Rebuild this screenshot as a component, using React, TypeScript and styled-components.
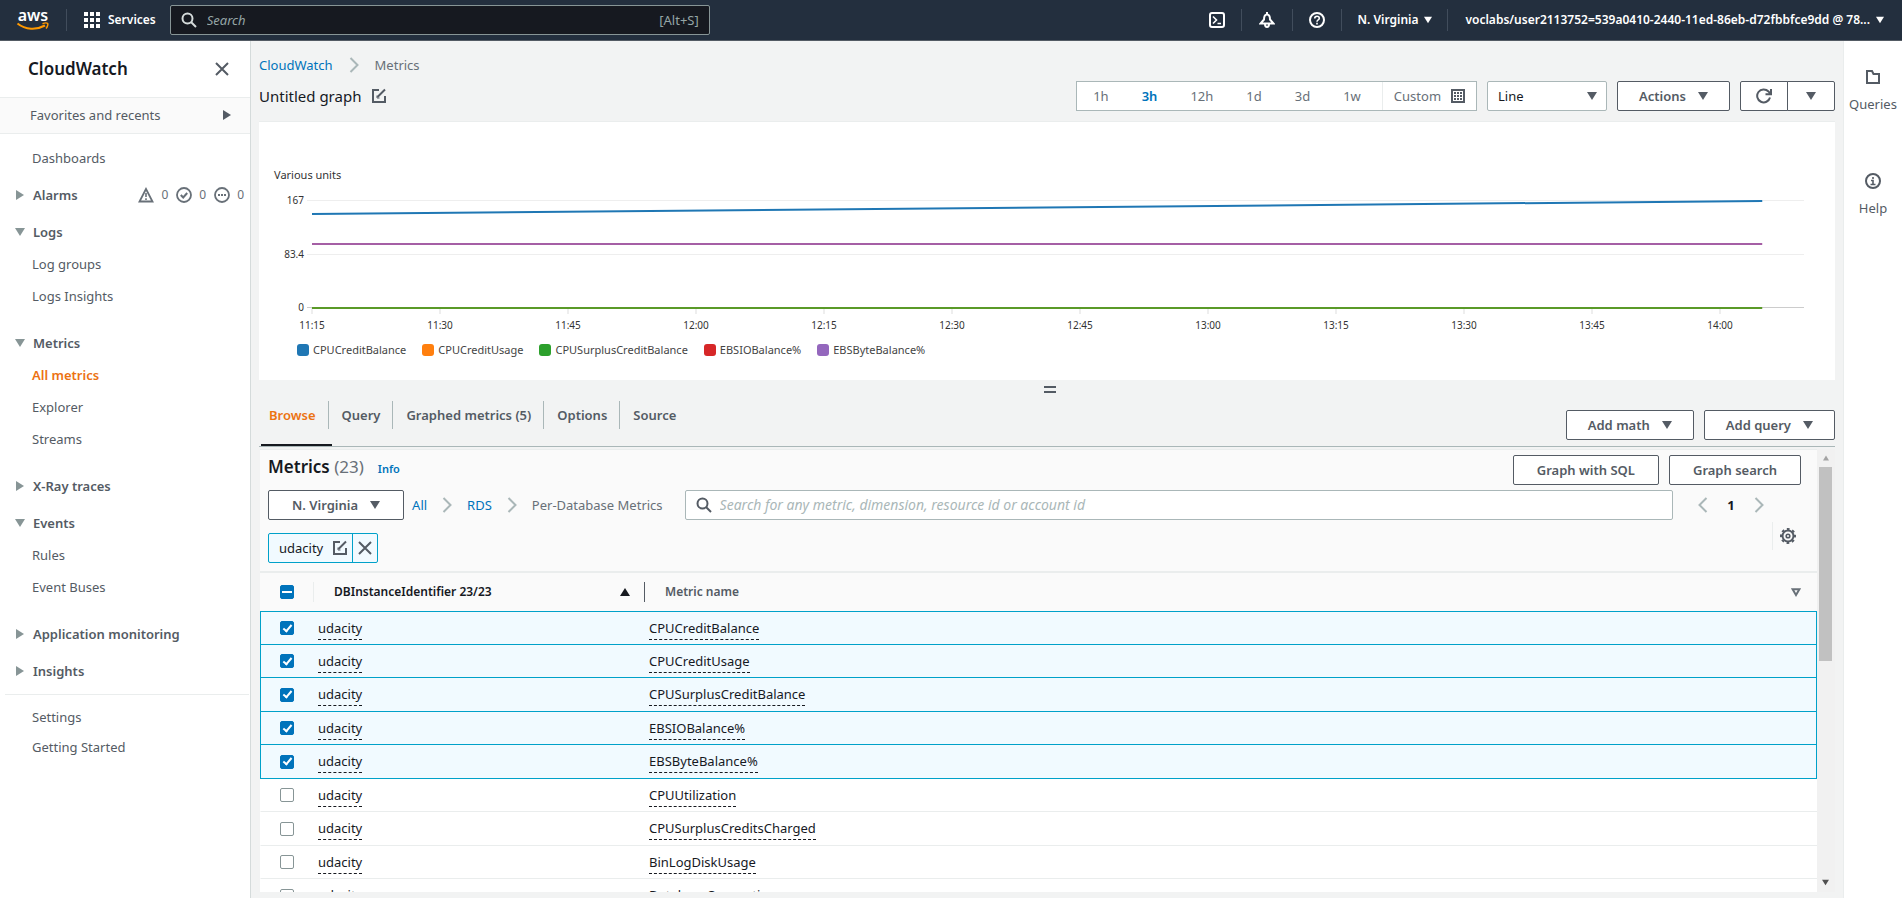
import React, { useEffect, useRef, useState } from 'react';
import styled, { createGlobalStyle, css } from 'styled-components';

const color = {
  nav: '#232f3e',
  page: '#f2f3f3',
  text: '#16191f',
  strong: '#545b64',
  muted: '#687078',
  border: '#aab7b8',
  divider: '#eaeded',
  link: '#0073bb',
  accent: '#ec7211',
  selected: '#f1faff',
  selectedBorder: '#00a1c9',
};

const GlobalStyle = createGlobalStyle`
  *, *::before, *::after { box-sizing: border-box; }
  body {
    margin: 0;
    background: ${color.page};
    color: ${color.text};
    font: 13px/20px "Noto Sans", "Open Sans", sans-serif;
  }
  button, input, select { font: inherit; color: inherit; }
  button { cursor: pointer; }
  a { text-decoration: none; }
  ul, ol { list-style: none; margin: 0; padding: 0; }
  h1, h2 { margin: 0; }
  svg { display: block; flex: none; }
`;

/* ---------- icons ---------- */

const Stroke = styled.svg.attrs({ viewBox: '0 0 16 16', width: 16, height: 16, 'aria-hidden': true })`
  fill: none;
  stroke: currentColor;
  stroke-width: 2;
`;

const Caret = ({ size = 10, dir = 'down' }: { size?: number; dir?: 'down' | 'right' | 'up' }) => {
  const d = { down: 'M0 1h10L5 9z', right: 'M1 0v10l8-5z', up: 'M0 9h10L5 1z' }[dir];
  return (
    <svg width={size} height={size} viewBox="0 0 10 10" fill="currentColor" aria-hidden="true">
      <path d={d} />
    </svg>
  );
};

const CloseIcon = () => (
  <Stroke><path d="M2 2l12 12M14 2L2 14" /></Stroke>
);
const EditIcon = () => (
  <Stroke><path d="M8 2H2v12h12V8M14 1.5L6.5 9" /><path d="M6 7.5V10h2.5" strokeWidth="1" /></Stroke>
);
const SearchIcon = () => (
  <Stroke><circle cx="6.5" cy="6.5" r="5" /><path d="M10 10l5 5" /></Stroke>
);
const Chevron = ({ left = false }: { left?: boolean }) => (
  <svg width="10" height="16" viewBox="0 0 10 16" fill="none" stroke={color.border} strokeWidth="2" aria-hidden="true">
    <path d={left ? 'M8.5 1l-7 7 7 7' : 'M1.5 1l7 7-7 7'} />
  </svg>
);
const GridIcon = () => (
  <svg width="16" height="16" viewBox="0 0 16 16" fill="currentColor" aria-hidden="true">
    {[0, 6, 12].map(y => [0, 6, 12].map(x => <rect key={`${x}-${y}`} x={x} y={y} width="4" height="4" />))}
  </svg>
);
const ShellIcon = () => (
  <Stroke><rect x="1" y="1" width="14" height="14" rx="2" /><path d="M4 4.5L7.5 8 4 11.5M8.5 11.5H12" strokeWidth="1.6" /></Stroke>
);
const BellIcon = () => (
  <Stroke><path d="M1.5 11.5h13L11 7.500C11 4 10 2.500 8 2.500S5 4 5 7.500z" /><path d="M8 0v2.500M6 12c0 4 4 4 4 0" /></Stroke>
);
const QuestionIcon = () => (
  <Stroke><circle cx="8" cy="8" r="7" /><path d="M5.700 6.500c0-3 4.600-3 4.600-.2C10.300 8 8 7.800 8 9.700M8 10.800v1.600" strokeWidth="1.6" /></Stroke>
);
const WarningIcon = () => (
  <Stroke><path d="M8 2L1.500 14.500h13z" strokeWidth="1.800" /><path d="M8 6v4M8 11.200V13" strokeWidth="1.6" /></Stroke>
);
const OkIcon = () => (
  <Stroke><circle cx="8" cy="8" r="7" strokeWidth="1.800" /><path d="M4.800 8l2.400 2.500L11.200 6" /></Stroke>
);
const PendingIcon = () => (
  <Stroke><circle cx="8" cy="8" r="7" strokeWidth="1.800" /><path d="M4 8h2M7 8h2M10 8h2" /></Stroke>
);
const InfoIcon = () => (
  <Stroke><circle cx="8" cy="8" r="7" /><path d="M8 4v2M6 7.500h2v4M5.500 11.500h5" strokeWidth="1.600" /></Stroke>
);
const FolderIcon = () => (
  <Stroke><path d="M2 2h5l1.500 3H14v9H2z" /></Stroke>
);
const RefreshIcon = () => (
  <Stroke><path d="M14 9.500A6.500 6.500 0 1 1 12.500 3.500L14.500 6M15 1v5.200H9.500" /></Stroke>
);
const CalendarIcon = () => (
  <svg width="14" height="14" viewBox="0 0 14 14" fill="currentColor" aria-hidden="true">
    <path fillRule="evenodd" d="M0 0h14v14H0zM2 2v10h10V2z" />
    {[3, 6, 9].map(y => [3, 6, 9].map(x => <rect key={`${x}-${y}`} x={x} y={y} width="2" height="2" />))}
  </svg>
);
const GearIcon = () => (
  <Stroke>
    <circle cx="8" cy="8" r="5.500" />
    <circle cx="8" cy="8" r="7" strokeDasharray="2.750 2.750" strokeDashoffset="1.370" />
    <circle cx="8" cy="8" r="1.800" strokeWidth="1.600" />
  </Stroke>
);
const FilterIcon = () => (
  <svg width="10" height="9" viewBox="0 0 10 9" fill="none" stroke={color.muted} strokeWidth="2" aria-hidden="true">
    <path d="M1.600 1.200h6.800L5 7z" />
  </svg>
);
const LogoSvg = styled.svg`
  overflow: visible;
`;
const AwsLogo = () => (
  <LogoSvg width="34" height="24" viewBox="0 0 34 24" role="img" aria-label="AWS">
    <text x="17" y="13" fill="#fff" textAnchor="middle" fontFamily="Noto Sans, sans-serif" fontWeight="600" fontSize="16">aws</text>
    <path d="M1.500 15.500c8 6.500 19 6.700 27.500 2" fill="none" stroke="#ff9900" strokeWidth="2" />
    <path d="M26.500 15.700c2-.8 4.500-.9 5.200-.2.500.8-.3 3.500-1.700 5" fill="none" stroke="#ff9900" strokeWidth="1.500" />
  </LogoSvg>
);

/* ---------- top navigation ---------- */

const TopNav = styled.header`
  display: flex;
  align-items: center;
  height: 41px;
  padding: 0 18px 0 16px;
  background: ${color.nav};
  border-bottom: 1px solid ${color.strong};
  color: #fff;
  font-size: 12px;
  font-weight: 600;
`;
const NavDivider = styled.span`
  width: 1px;
  height: 22px;
  background: #414d5c;
`;
const NavButton = styled.button<{ $start?: number; $end?: number; $gap?: number }>`
  display: flex;
  align-items: center;
  gap: ${p => p.$gap ?? 8}px;
  padding: 0 ${p => p.$end ?? 16}px 0 ${p => p.$start ?? 16}px;
  border: 0;
  background: none;
  white-space: nowrap;
`;
const LogoLink = styled.a`
  margin-right: 16px;
`;
const NavSearch = styled.label`
  display: flex;
  align-items: center;
  gap: 8px;
  flex: 0 1 540px;
  height: 30px;
  margin-right: auto;
  padding: 0 10px;
  border: 1px solid #879596;
  border-radius: 2px;
  background: #161920;
  color: #d5dbdb;
  font-size: 13px;
  font-weight: 400;
`;
const NavSearchInput = styled.input`
  flex: 1;
  min-width: 0;
  border: 0;
  outline: 0;
  background: none;
  &::placeholder { color: #95a5a6; font-style: italic; opacity: 1; }
`;
const Shortcut = styled.span`
  color: #95a5a6;
`;

/* ---------- page frame ---------- */

const Page = styled.div`
  display: flex;
  flex-direction: column;
  height: 100vh;
  overflow: hidden;
`;
const Frame = styled.div`
  display: grid;
  grid-template-columns: 251px minmax(0, 1fr) 59px;
  flex: 1;
  min-height: 0;
`;

/* ---------- side navigation ---------- */

const Sidebar = styled.nav`
  background: #fff;
  border-right: 1px solid #d5dbdb;
  color: ${color.strong};
  overflow: hidden;
`;
const SidebarHeader = styled.div`
  display: flex;
  align-items: center;
  justify-content: space-between;
  height: 56px;
  padding: 0 20px 0 28px;
`;
const ServiceName = styled.h2`
  color: ${color.text};
  font-size: 17px;
  font-weight: 600;
`;
const IconButton = styled.button`
  display: flex;
  align-items: center;
  justify-content: center;
  padding: 0;
  border: 0;
  background: none;
  color: ${color.strong};
`;
const Favorites = styled.button`
  display: flex;
  align-items: center;
  justify-content: space-between;
  width: 100%;
  height: 37px;
  padding: 0 18px 2px 30px;
  border: 1px solid ${color.divider};
  border-width: 1px 0;
  background: #fafafa;
`;
const NavBody = styled.div`
  padding-top: 8px;
`;
const SideLink = styled.a<{ $active?: boolean; $short?: boolean }>`
  display: block;
  padding-left: 32px;
  line-height: ${p => (p.$short ? 30 : 32)}px;
  color: ${p => (p.$active ? color.accent : color.strong)};
  font-weight: ${p => (p.$active ? 600 : 400)};
`;
const Group = styled.section`
  margin-top: 5px;
`;
const GroupHead = styled.div`
  display: flex;
  align-items: center;
  justify-content: space-between;
  height: 32px;
  padding: 0 6px 0 15px;
`;
const GroupToggle = styled.button`
  display: flex;
  align-items: center;
  gap: 8px;
  padding: 0;
  border: 0;
  background: none;
  font-weight: 600;
  svg { color: #879596; }
`;
const GroupList = styled.ul`
  padding-bottom: 10px;
`;
const AlarmCounts = styled.ul`
  display: flex;
  gap: 8px;
  color: ${color.muted};
  font-size: 12px;
`;
const AlarmCount = styled.li`
  display: flex;
  align-items: center;
  gap: 7px;
`;
const SideRule = styled.hr`
  height: 1px;
  margin: 7px 1px 7px 5px;
  border: 0;
  background: ${color.divider};
`;

type NavGroup = { label: string; open: boolean; links: string[]; alarms?: boolean };
const navGroups: NavGroup[] = [
  { label: 'Alarms', open: false, links: [], alarms: true },
  { label: 'Logs', open: true, links: ['Log groups', 'Logs Insights'] },
  { label: 'Metrics', open: true, links: ['All metrics', 'Explorer', 'Streams'] },
  { label: 'X-Ray traces', open: false, links: [] },
  { label: 'Events', open: true, links: ['Rules', 'Event Buses'] },
  { label: 'Application monitoring', open: false, links: [] },
  { label: 'Insights', open: false, links: [] },
];

const SideNav = () => (
  <Sidebar aria-label="CloudWatch">
    <SidebarHeader>
      <ServiceName>CloudWatch</ServiceName>
      <IconButton aria-label="Close navigation"><CloseIcon /></IconButton>
    </SidebarHeader>
    <Favorites>Favorites and recents<Caret dir="right" /></Favorites>
    <NavBody>
      <SideLink href="#dashboards">Dashboards</SideLink>
      {navGroups.map(g => (
        <Group key={g.label}>
          <GroupHead>
            <GroupToggle aria-expanded={g.open}>
              <Caret dir={g.open ? 'down' : 'right'} />
              {g.label}
            </GroupToggle>
            {g.alarms && (
              <AlarmCounts>
                <AlarmCount><WarningIcon />0</AlarmCount>
                <AlarmCount><OkIcon />0</AlarmCount>
                <AlarmCount><PendingIcon />0</AlarmCount>
              </AlarmCounts>
            )}
          </GroupHead>
          {g.links.length > 0 && (
            <GroupList>
              {g.links.map(l => (
                <li key={l}><SideLink href="#nav" $active={l === 'All metrics'}>{l}</SideLink></li>
              ))}
            </GroupList>
          )}
        </Group>
      ))}
      <SideRule />
      <SideLink href="#settings" $short>Settings</SideLink>
      <SideLink href="#start" $short>Getting Started</SideLink>
    </NavBody>
  </Sidebar>
);

/* ---------- shared controls ---------- */

const Button = styled.button<{ $pad?: number }>`
  display: inline-flex;
  align-items: center;
  justify-content: center;
  gap: 12px;
  height: 30px;
  padding: 0 ${p => p.$pad ?? 21}px;
  border: 1px solid ${color.strong};
  border-radius: 2px;
  background: #fff;
  color: ${color.strong};
  font-weight: 600;
  white-space: nowrap;
`;
const ButtonRow = styled.div`
  display: flex;
  gap: 10px;
`;
const Crumbs = styled.ol<{ $gap: number }>`
  display: flex;
  align-items: center;
  gap: ${p => p.$gap}px;
  color: ${color.muted};
  white-space: nowrap;
  li { display: flex; align-items: center; gap: ${p => p.$gap}px; }
  a { color: ${color.link}; }
`;

/* ---------- main column ---------- */

const Main = styled.main`
  display: flex;
  flex-direction: column;
  min-height: 0;
  padding: 14px 8px 6px;
`;
const TitleBar = styled.div`
  display: flex;
  align-items: center;
  justify-content: space-between;
  margin: 6px 0 10px;
`;
const GraphTitle = styled.h1`
  display: flex;
  align-items: center;
  gap: 10px;
  font-size: 15px;
  font-weight: 400;
`;
const RangeGroup = styled.div`
  display: flex;
  height: 30px;
  border: 1px solid ${color.border};
  background: #fff;
`;
const RangeButton = styled.button<{ $active?: boolean; $custom?: boolean }>`
  display: flex;
  align-items: center;
  gap: 10px;
  padding: 0 17px 0 16px;
  border: 0;
  background: none;
  color: ${p => (p.$active ? color.link : color.muted)};
  font-weight: ${p => (p.$active ? 600 : 400)};
  ${p => p.$custom && css`
    margin-left: 4px;
    padding: 0 11px;
    border-left: 1px solid ${color.divider};
    svg { color: ${color.strong}; }
  `}
`;
const SelectBox = styled.div`
  display: grid;
  align-items: center;
  width: 120px;
  height: 30px;
  border: 1px solid ${color.border};
  border-radius: 2px;
  background: #fff;
  > * { grid-area: 1 / 1; }
  svg { justify-self: end; margin-right: 9px; color: ${color.strong}; pointer-events: none; }
`;
const Select = styled.select`
  width: 100%;
  height: 28px;
  padding: 0 10px;
  border: 0;
  appearance: none;
  background: none;
`;
const SplitButton = styled.div`
  display: flex;
  ${Button} { width: 48px; }
  ${Button}:first-child { border-radius: 2px 0 0 2px; }
  ${Button}:last-child { margin-left: -1px; border-radius: 0 2px 2px 0; }
`;

/* ---------- chart ---------- */

const ChartPanel = styled.section`
  padding: 43px 31px 20px 53px;
  border-top: 1px solid ${color.divider};
  background: #fff;
  font-size: 11px;
`;
const ChartUnits = styled.div`
  margin-left: -38px;
  line-height: 20px;
  color: #333;
`;
const Plot = styled.svg`
  width: 100%;
  height: 152px;
  overflow: visible;
  font-size: 10px;
  fill: #333;
`;
const Legend = styled.ul`
  display: flex;
  gap: 16px;
  margin: 3px 0 0 -15px;
  line-height: 20px;
  color: #444;
`;
const LegendItem = styled.li`
  display: flex;
  align-items: center;
  gap: 4px;
`;
const Swatch = styled.span<{ $color: string }>`
  width: 12px;
  height: 12px;
  border-radius: 3px;
  background: ${p => p.$color};
`;

const ticks = ['11:15', '11:30', '11:45', '12:00', '12:15', '12:30', '12:45', '13:00', '13:15', '13:30', '13:45', '14:00'];
const gridLines = [
  { label: '167', y: 15 },
  { label: '83.4', y: 69 },
  { label: '0', y: 122 },
];
const series = [
  { name: 'CPUCreditBalance', color: '#1f77b4' },
  { name: 'CPUCreditUsage', color: '#ff7f0e' },
  { name: 'CPUSurplusCreditBalance', color: '#2ca02c' },
  { name: 'EBSIOBalance%', color: '#d62728' },
  { name: 'EBSByteBalance%', color: '#9467bd' },
];

const Chart = () => (
  <ChartPanel aria-label="Graph">
    <ChartUnits>Various units</ChartUnits>
    <Plot>
      {gridLines.map(g => (
        <g key={g.label}>
          <line x1="-5" x2="100%" y1={g.y + 0.5} y2={g.y + 0.5} stroke={g.y === 122 ? '#cccccc' : '#eeeeee'} />
          <text x="-8" y={g.y + 4} textAnchor="end">{g.label}</text>
        </g>
      ))}
      {ticks.map((t, i) => {
        const x = `${(i * 128 * 100) / 1492}%`;
        return (
          <g key={t}>
            <line x1={x} x2={x} y1="123" y2="129" stroke="#dddddd" />
            <text x={x} y="144" textAnchor="middle">{t}</text>
          </g>
        );
      })}
      <line x1="0" x2="97.200%" y1="29" y2="16" stroke="#1f77b4" strokeWidth="2" />
      <line x1="0" x2="97.200%" y1="59" y2="59" stroke="#a55fa5" strokeWidth="2" />
      <line x1="0" x2="97.200%" y1="123" y2="123" stroke="#5a9a28" strokeWidth="2" />
    </Plot>
    <Legend>
      {series.map(s => (
        <LegendItem key={s.name}><Swatch $color={s.color} />{s.name}</LegendItem>
      ))}
    </Legend>
  </ChartPanel>
);

/* ---------- tabs ---------- */

const ResizeHandle = styled.button`
  align-self: center;
  width: 12px;
  height: 7px;
  margin: 6px 0 8px 6px;
  padding: 0;
  border: solid ${color.strong};
  border-width: 2px 0;
  background: none;
`;
const TabBar = styled.div`
  display: flex;
  justify-content: space-between;
  height: 46px;
  border-bottom: 1px solid ${color.border};
`;
const TabList = styled.div`
  display: flex;
  gap: 2px;
  padding-left: 2px;
`;
const Tab = styled.button<{ $active?: boolean }>`
  display: flex;
  align-items: flex-start;
  padding: 0 3px 0 8px;
  border: 0;
  border-bottom: 2px solid ${p => (p.$active ? color.text : 'transparent')};
  background: none;
  color: ${p => (p.$active ? color.accent : color.strong)};
  font-weight: 600;
  white-space: nowrap;
  span {
    padding-right: 12px;
    border-right: 1px solid ${color.border};
    line-height: 28px;
  }
  &:last-child span { border-right: 0; }
`;
const TabActions = styled(ButtonRow)`
  padding-top: 9px;
`;

/* ---------- metric browser ---------- */

const Browser = styled.section`
  display: flex;
  flex: 1;
  min-height: 0;
  margin: 2px 0 0 1px;
`;
const BrowserContent = styled.div`
  flex: 1;
  min-width: 0;
  overflow: hidden;
  background: #fff;
`;
const BrowserHead = styled.div`
  padding: 5px 16px 0 8px;
  border-top: 1px solid ${color.divider};
  background: #fafafa;
`;
const HeadRow = styled.div`
  display: flex;
  justify-content: space-between;
  margin-bottom: 5px;
`;
const Heading = styled.h2`
  font-size: 17px;
  font-weight: 600;
  line-height: 24px;
`;
const Count = styled.span`
  color: ${color.muted};
  font-weight: 400;
`;
const InfoLink = styled.a`
  margin-left: 14px;
  color: ${color.link};
  font-size: 11px;
`;
const FilterRow = styled.div`
  display: flex;
  align-items: center;
  gap: 8px;
`;
const MetricSearch = styled.label`
  display: flex;
  align-items: center;
  gap: 8px;
  flex: 1;
  height: 30px;
  margin-left: 14px;
  padding: 0 10px;
  border: 1px solid ${color.border};
  border-radius: 2px;
  background: #fff;
  color: ${color.strong};
  font-size: 14px;
`;
const MetricSearchInput = styled.input`
  flex: 1;
  min-width: 0;
  padding: 0;
  border: 0;
  outline: 0;
  &::placeholder { color: ${color.border}; font-style: italic; opacity: 1; }
`;
const Pagination = styled.div`
  display: flex;
  margin: 0 28px 0 8px;
  ${IconButton} { width: 28px; height: 28px; color: ${color.text}; }
`;
const TokenRow = styled.div`
  display: flex;
  align-items: flex-start;
  justify-content: space-between;
  padding-top: 2px;
`;
const Token = styled.div`
  display: flex;
  height: 30px;
  margin: 11px 0 8px;
  border: 1px solid ${color.selectedBorder};
  border-radius: 2px;
  background: ${color.selected};
  ${IconButton} { gap: 9px; padding: 0 4px 0 10px; color: ${color.text}; }
  ${IconButton} + ${IconButton} { padding: 0 4px; border-left: 1px solid ${color.selectedBorder}; }
  svg { color: ${color.strong}; }
`;
const Preferences = styled.div`
  display: flex;
  height: 28px;
  padding: 0 5px 0 7px;
  border-left: 1px solid ${color.divider};
`;

const Table = styled.table`
  width: 100%;
  border-spacing: 0;
  border-top: 2px solid ${color.divider};
  table-layout: fixed;
  th, td { padding: 0; text-align: left; }
`;
const Col = styled.col<{ $width?: number }>`
  width: ${p => (p.$width ? `${p.$width}px` : 'auto')};
`;
const Th = styled.th<{ $sorted?: boolean }>`
  height: 38px;
  background: #fafafa;
  color: ${p => (p.$sorted ? color.text : color.strong)};
  font-size: 12px;
  font-weight: 600;
`;
const ThInner = styled.div<{ $line?: string; $pad: number }>`
  display: flex;
  align-items: center;
  justify-content: space-between;
  height: 20px;
  padding: 0 ${p => (p.$line ? 14 : 16)}px 0 ${p => p.$pad}px;
  border-right: ${p => (p.$line ? `1px solid ${p.$line}` : 0)};
`;
const Row = styled.tr<{ $selected: boolean }>`
  height: 33px;
  background: ${p => (p.$selected ? color.selected : '#fff')};
  &:nth-child(odd) { height: 34px; }
  td { border-bottom: 1px solid ${p => (p.$selected ? color.selectedBorder : color.divider)}; }
  td:first-child { padding-left: 19px; border-left: 1px solid ${p => (p.$selected ? color.selectedBorder : '#fff')}; }
  ${p => p.$selected && css`
    &:first-child td { border-top: 1px solid ${color.selectedBorder}; }
    td:last-child { border-right: 1px solid ${color.selectedBorder}; }
  `}
`;
const Cell = styled.td`
  && { padding-left: 4px; }
`;
const Value = styled.button`
  display: block;
  padding: 0;
  border: 0;
  border-bottom: 1px dashed ${color.text};
  background: none;
  line-height: 22px;
`;
const Checkbox = styled.input.attrs({ type: 'checkbox' })`
  display: grid;
  place-items: center;
  width: 14px;
  height: 14px;
  margin: 0;
  border: 1px solid #879596;
  border-radius: 2px;
  background: #fff;
  appearance: none;
  &:checked, &:indeterminate { border-color: ${color.link}; background: ${color.link}; }
  &:checked::after {
    content: '';
    width: 5px;
    height: 9px;
    margin-bottom: 2px;
    border: solid #fff;
    border-width: 0 2px 2px 0;
    transform: rotate(40deg);
  }
  &:indeterminate::after { content: ''; width: 10px; height: 2px; background: #fff; }
`;

const ScrollTrack = styled.div`
  display: flex;
  flex-direction: column;
  align-items: center;
  justify-content: space-between;
  width: 18px;
  padding: 6px 3px 6px 2px;
  background: #f1f1f1;
`;
const ScrollThumb = styled.div`
  width: 13px;
  height: 194px;
  margin: 6px 0 auto;
  background: #c1c1c1;
`;
const ScrollArrow = styled.span<{ $dim?: boolean }>`
  color: ${p => (p.$dim ? '#a3a3a3' : '#505050')};
`;

const metricNames = [
  'CPUCreditBalance',
  'CPUCreditUsage',
  'CPUSurplusCreditBalance',
  'EBSIOBalance%',
  'EBSByteBalance%',
  'CPUUtilization',
  'CPUSurplusCreditsCharged',
  'BinLogDiskUsage',
  'DatabaseConnections',
];

const MetricTable = () => {
  const [selected, setSelected] = useState<string[]>(metricNames.slice(0, 5));
  const allRef = useRef<HTMLInputElement>(null);
  useEffect(() => {
    if (allRef.current) {
      allRef.current.indeterminate = selected.length > 0 && selected.length < metricNames.length;
    }
  }, [selected]);
  const toggle = (m: string) =>
    setSelected(s => (s.includes(m) ? s.filter(x => x !== m) : [...s, m]));
  return (
    <Table>
      <colgroup>
        <Col $width={54} />
        <Col $width={331} />
        <Col />
      </colgroup>
      <thead>
        <tr>
          <Th>
            <ThInner $pad={20} $line={color.divider}>
              <Checkbox
                ref={allRef}
                aria-label="Select all metrics"
                checked={selected.length === metricNames.length}
                onChange={e => setSelected(e.target.checked ? metricNames : [])}
              />
            </ThInner>
          </Th>
          <Th $sorted aria-sort="ascending">
            <ThInner $pad={20} $line={color.strong}>DBInstanceIdentifier 23/23<Caret dir="up" /></ThInner>
          </Th>
          <Th><ThInner $pad={20}>Metric name<FilterIcon /></ThInner></Th>
        </tr>
      </thead>
      <tbody>
        {metricNames.map(m => (
          <Row key={m} $selected={selected.includes(m)}>
            <td>
              <Checkbox aria-label={`Select ${m}`} checked={selected.includes(m)} onChange={() => toggle(m)} />
            </td>
            <Cell><Value>udacity</Value></Cell>
            <Cell><Value>{m}</Value></Cell>
          </Row>
        ))}
      </tbody>
    </Table>
  );
};

/* ---------- right rail ---------- */

const Rail = styled.aside`
  display: flex;
  flex-direction: column;
  align-items: center;
  gap: 60px;
  padding-top: 28px;
  border-left: 1px solid ${color.divider};
  background: #fff;
`;
const RailButton = styled.button`
  display: flex;
  flex-direction: column;
  align-items: center;
  gap: 10px;
  height: 44px;
  padding: 0;
  border: 0;
  background: none;
  color: ${color.strong};
  line-height: 18px;
`;

const ranges = ['1h', '3h', '12h', '1d', '3d', '1w'];
const tabs = ['Browse', 'Query', 'Graphed metrics (5)', 'Options', 'Source'];

export default function App() {
  const [range, setRange] = useState('3h');
  const [tab, setTab] = useState('Browse');
  return (
    <Page>
      <GlobalStyle />
      <TopNav>
        <LogoLink href="#home"><AwsLogo /></LogoLink>
        <NavDivider />
        <NavButton $start={17} $end={14}><GridIcon />Services</NavButton>
        <NavSearch>
          <SearchIcon />
          <NavSearchInput type="search" placeholder="Search" aria-label="Search" />
          <Shortcut>[Alt+S]</Shortcut>
        </NavSearch>
        <NavButton aria-label="CloudShell"><ShellIcon /></NavButton>
        <NavDivider />
        <NavButton aria-label="Notifications" $start={17} $end={17}><BellIcon /></NavButton>
        <NavDivider />
        <NavButton aria-label="Support"><QuestionIcon /></NavButton>
        <NavDivider />
        <NavButton $start={15} $end={15} $gap={6}>N. Virginia<Caret size={8} /></NavButton>
        <NavDivider />
        <NavButton $start={17} $end={0} $gap={6}>
          voclabs/user2113752=539a0410-2440-11ed-86eb-d72fbbfce9dd @ 78...
          <Caret size={8} />
        </NavButton>
      </TopNav>
      <Frame>
        <SideNav />
        <Main>
          <Crumbs $gap={16}>
            <li><a href="#cw">CloudWatch</a><Chevron /></li>
            <li>Metrics</li>
          </Crumbs>
          <TitleBar>
            <GraphTitle>Untitled graph<IconButton aria-label="Rename graph"><EditIcon /></IconButton></GraphTitle>
            <ButtonRow>
              <RangeGroup role="group" aria-label="Time range">
                {ranges.map(r => (
                  <RangeButton key={r} $active={r === range} onClick={() => setRange(r)}>{r}</RangeButton>
                ))}
                <RangeButton $custom>Custom<CalendarIcon /></RangeButton>
              </RangeGroup>
              <SelectBox>
                <Select aria-label="Graph type" defaultValue="Line">
                  <option>Line</option>
                </Select>
                <Caret />
              </SelectBox>
              <Button>Actions<Caret /></Button>
              <SplitButton>
                <Button aria-label="Refresh" $pad={0}><RefreshIcon /></Button>
                <Button aria-label="Refresh options" $pad={0}><Caret /></Button>
              </SplitButton>
            </ButtonRow>
          </TitleBar>
          <Chart />
          <ResizeHandle aria-label="Resize graph" />
          <TabBar>
            <TabList role="tablist">
              {tabs.map(t => (
                <Tab key={t} role="tab" aria-selected={t === tab} $active={t === tab} onClick={() => setTab(t)}>
                  <span>{t}</span>
                </Tab>
              ))}
            </TabList>
            <TabActions>
              <Button>Add math<Caret /></Button>
              <Button>Add query<Caret /></Button>
            </TabActions>
          </TabBar>
          <Browser>
            <BrowserContent>
              <BrowserHead>
                <HeadRow>
                  <Heading>Metrics <Count>(23)</Count><InfoLink href="#info">Info</InfoLink></Heading>
                  <ButtonRow>
                    <Button $pad={23}>Graph with SQL</Button>
                    <Button $pad={23}>Graph search</Button>
                  </ButtonRow>
                </HeadRow>
                <FilterRow>
                  <Button $pad={23}>N. Virginia<Caret /></Button>
                  <Crumbs $gap={15}>
                    <li><a href="#all">All</a><Chevron /></li>
                    <li><a href="#rds">RDS</a><Chevron /></li>
                    <li>Per-Database Metrics</li>
                  </Crumbs>
                  <MetricSearch>
                    <SearchIcon />
                    <MetricSearchInput
                      aria-label="Search metrics"
                      placeholder="Search for any metric, dimension, resource id or account id"
                    />
                  </MetricSearch>
                  <Pagination>
                    <IconButton aria-label="Previous page"><Chevron left /></IconButton>
                    <IconButton aria-label="Page 1"><b>1</b></IconButton>
                    <IconButton aria-label="Next page"><Chevron /></IconButton>
                  </Pagination>
                </FilterRow>
                <TokenRow>
                  <Token>
                    <IconButton>udacity<EditIcon /></IconButton>
                    <IconButton aria-label="Remove filter"><CloseIcon /></IconButton>
                  </Token>
                  <Preferences>
                    <IconButton aria-label="Preferences"><GearIcon /></IconButton>
                  </Preferences>
                </TokenRow>
              </BrowserHead>
              <MetricTable />
            </BrowserContent>
            <ScrollTrack aria-hidden="true">
              <ScrollArrow $dim><Caret dir="up" size={6} /></ScrollArrow>
              <ScrollThumb />
              <ScrollArrow><Caret size={7} /></ScrollArrow>
            </ScrollTrack>
          </Browser>
        </Main>
        <Rail>
          <RailButton><FolderIcon />Queries</RailButton>
          <RailButton><InfoIcon />Help</RailButton>
        </Rail>
      </Frame>
    </Page>
  );
}
